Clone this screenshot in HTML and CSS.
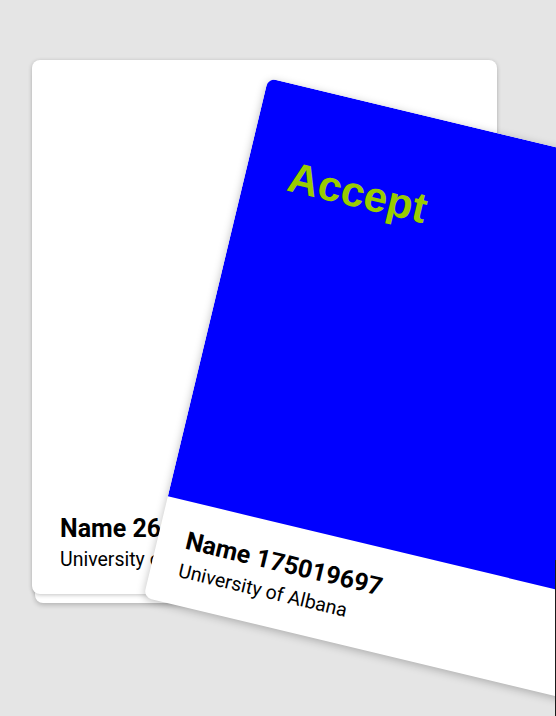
FILE: index.html
```html
<!DOCTYPE html>
<html>
<head>
<meta charset="utf-8">
<link rel="stylesheet" href="styles.css">
</head>
<body>
<div class="deck">
  <div class="card card-under"></div>
  <div class="card card-back">
    <div class="card-media"></div>
    <div class="card-footer">
      <div class="card-name">Name 260419332</div>
      <div class="card-uni">University of Tirana</div>
    </div>
  </div>
  <div class="card card-front">
    <div class="card-media media-blue">
      <div class="accept">Accept</div>
    </div>
    <div class="card-footer">
      <div class="card-name">Name 175019697</div>
      <div class="card-uni">University of Albana</div>
    </div>
  </div>
</div>
<div class="edge-line"></div>
</body>
</html>
```
FILE: styles.css
```css
html, body {
  margin: 0;
  padding: 0;
}
body {
  background: #e5e5e5;
  width: 556px;
  height: 716px;
  overflow: hidden;
  position: relative;
  font-family: Roboto, "Liberation Sans", sans-serif;
}
.deck {
  position: relative;
  margin: 60px 0 0 32px;
  width: 465px;
  height: 534px;
}
.card {
  position: absolute;
  inset: 0;
  background: #fff;
  border-radius: 8px;
  overflow: hidden;
  display: flex;
  flex-direction: column;
  box-shadow: 0 1px 4px rgba(0, 0, 0, 0.24);
}
.card-under {
  inset: 9px 3px -9px 3px;
  box-shadow: 0 2px 5px rgba(0, 0, 0, 0.22);
}
.card-front {
  transform: translate(167.5px, 65px) rotate(13.5deg);
  box-shadow: 0 2px 8px rgba(0, 0, 0, 0.25);
}
.card-media {
  flex: 1;
  position: relative;
}
.media-blue {
  background: #0000ff;
}
.accept {
  position: absolute;
  left: 43px;
  top: 70px;
  font-family: "Liberation Sans", Arial, sans-serif;
  font-weight: 700;
  font-size: 42.5px;
  line-height: 1;
  color: #99cc00;
}
.card-footer {
  height: 104px;
  box-sizing: border-box;
  padding: 24px 28px 0 28px;
  display: flex;
  flex-direction: column;
  gap: 5px;
  color: #000;
}
.card-name {
  font-weight: 700;
  font-size: 25px;
  line-height: 29px;
  white-space: nowrap;
}
.card-uni {
  font-size: 19.5px;
  line-height: 23px;
  white-space: nowrap;
}
.edge-line {
  position: absolute;
  right: 0;
  top: 560px;
  bottom: 0;
  width: 1px;
  background: #1a1a1a;
}
```
